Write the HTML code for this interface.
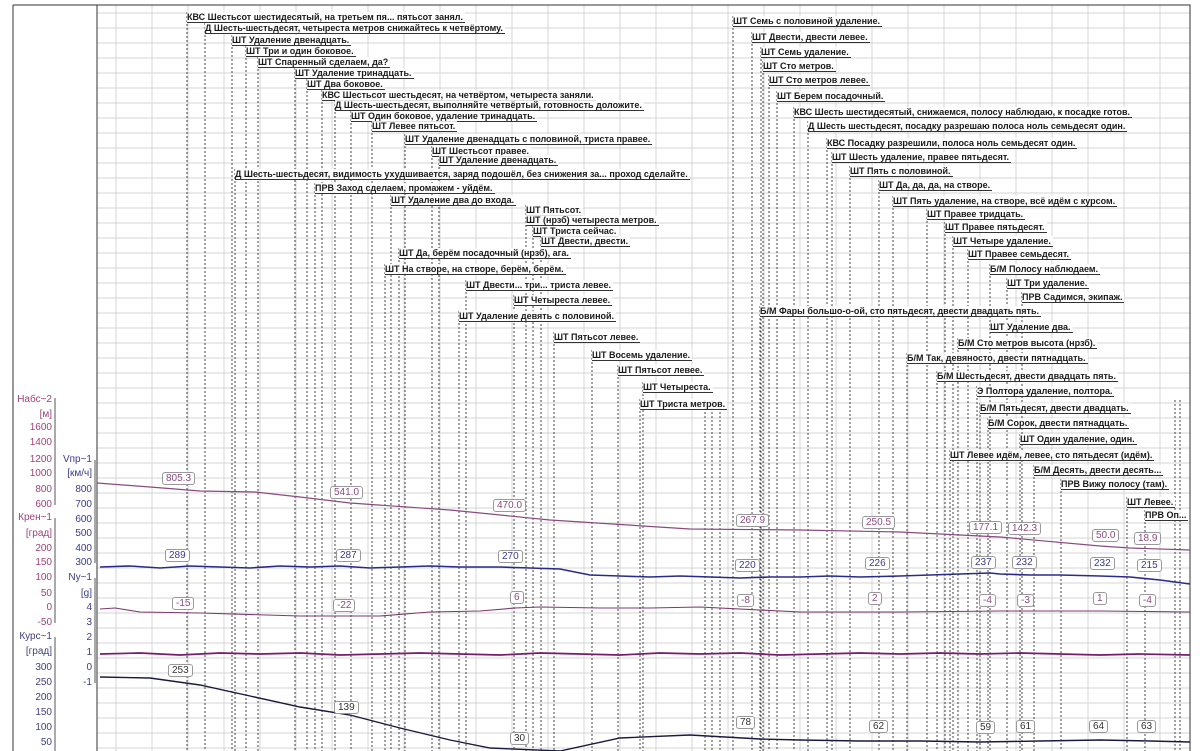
<!DOCTYPE html>
<html><head><meta charset="utf-8"><style>
html,body{margin:0;padding:0;background:#fff;width:1200px;height:751px;overflow:hidden}
#w{position:relative;width:1200px;height:751px}
svg{position:absolute;left:0;top:0}
.l{position:absolute;font:bold 9px "Liberation Sans","Noto Sans CJK SC",sans-serif;color:#1a1a1a;white-space:nowrap;line-height:10px;border-bottom:1px solid #333;padding-right:2px;background:rgba(255,255,255,0.85)}
.ax{position:absolute;font:10px "Liberation Sans",sans-serif;text-align:right;line-height:10px}
.v{position:absolute;font:10px "Liberation Sans",sans-serif;border:1px solid #999;border-radius:3px;background:#fff;padding:0 3px;line-height:11px}
</style></head><body><div id="w">
<svg width="1200" height="751" xmlns="http://www.w3.org/2000/svg">
<g stroke="#d4d4d4" stroke-width="1">
<path d="M97 13H1190M97 28H1190M97 43H1190M97 58H1190M97 73H1190M97 88H1190M97 103H1190M97 118H1190M97 133H1190M97 148H1190M97 163H1190M97 178H1190M97 193H1190M97 208H1190M97 223H1190M97 238H1190M97 253H1190M97 268H1190M97 283H1190M97 298H1190M97 313H1190M97 328H1190M97 343H1190M97 358H1190M97 373H1190M97 388H1190M97 403H1190M97 418H1190M97 433H1190M97 448H1190M97 463H1190M97 478H1190M97 493H1190M97 508H1190M97 523H1190M97 538H1190M97 553H1190M97 568H1190M97 583H1190M97 598H1190M97 613H1190M97 628H1190M97 643H1190M97 658H1190M97 673H1190M97 688H1190M97 703H1190M97 718H1190M97 733H1190M97 748H1190"/>
<path d="M116 5V751M152 5V751M188 5V751M224 5V751M260 5V751M296 5V751M332 5V751M368 5V751M404 5V751M440 5V751M476 5V751M512 5V751M548 5V751M584 5V751M620 5V751M656 5V751M692 5V751M728 5V751M764 5V751M800 5V751M836 5V751M872 5V751M908 5V751M944 5V751M980 5V751M1016 5V751M1052 5V751M1088 5V751M1124 5V751M1160 5V751"/>
</g>
<g stroke="#333" stroke-width="1" fill="none">
<path d="M13 5H1190V751M13 5V751M97 5V751"/>
<path d="M55 398V505M55 518V623M55 637V751M95 460V563M95 578V683" stroke="#555"/>
</g>
<g stroke="#444" stroke-width="1" stroke-dasharray="2,2" fill="none" id="dl">
<path d="M187 12V751M205 23V751M232 35V751M246 46V751M258 57V751M295 68V751M307 79V751M322 90V751M335 100V751M351 111V751M372 121V751M405 134V751M432 146V751M439 155V751M235 169V751M315 183V751M391 195V751M526 205V751M533 226V751M541 236V751M399 248V751M385 264V751M466 280V751M514 295V751M459 311V751M554 332V751M592 350V751M618 365V751M643 382V751M640 399V751M733 16V751M752 32V751M761 47V751M763 61V751M769 75V751M777 91V751M794 107V751M808 121V751M827 138V751M832 152V751M850 166V751M879 180V751M893 196V751M927 209V751M945 222V751M953 236V751M968 249V751M990 264V751M1007 278V751M1022 292V751M760 306V751M958 338V751M907 353V751M937 371V751M977 386V751M980 403V751M988 418V751M1020 434V751M950 450V751M1034 465V751M1061 479V751M1127 497V751M1145 510V751M705 400V751M712 400V751M720 400V751M1175 400V751M1180 400V751"/>
</g>
<!-- curves -->
<polyline fill="none" stroke="#8a4a80" stroke-width="1.2" points="97,483 150,487 200,491 255,492 300,497 350,503 450,510 550,520 690,529 800,530 900,532 1000,537 1100,546 1130,548 1190,550"/>
<polyline fill="none" stroke="#2a2a8a" stroke-width="1.6" points="100,567 130,566 160,568 190,566 220,567 250,568 280,566 310,567 340,566 370,568 400,567 430,566 460,567 500,567 530,568 560,569 590,575 620,576 650,577 680,576 710,577 740,578 770,577 800,577 830,576 860,577 900,576 930,575 960,574 990,573 1000,574 1030,575 1060,575 1100,576 1130,577 1160,580 1190,584"/>
<polyline fill="none" stroke="#7a3a70" stroke-width="1.1" points="100,609 115,608 140,612 200,613 300,616 380,616 430,612 480,611 515,608 540,607 600,608 650,608 700,607 800,612 900,612 1000,611 1100,611 1190,612"/>
<polyline fill="none" stroke="#7a1a6a" stroke-width="1.7" points="100,654 140,653 180,655 220,653 260,654 300,653 340,655 380,654 420,653 460,654 500,655 540,653 580,654 620,655 660,653 700,654 740,653 780,655 820,654 860,653 900,654 940,653 980,654 1020,653 1060,654 1100,655 1140,654 1190,655"/>
<polyline fill="none" stroke="#1a1a40" stroke-width="1.4" points="100,677 150,678 200,685 250,696 300,707 350,715 400,728 450,740 490,748 560,751 620,738 690,735 760,739 800,740 860,741 920,741 980,742 1040,741 1100,740 1150,741 1190,742"/>
</svg>

<div class="ax" style="left:8px;top:395px;width:44px;color:#a0407a">Набс~2</div>
<div class="ax" style="left:8px;top:410px;width:44px;color:#a0407a">[м]</div>
<div class="ax" style="left:8px;top:423px;width:44px;color:#a0407a">1600</div>
<div class="ax" style="left:8px;top:438px;width:44px;color:#a0407a">1400</div>
<div class="ax" style="left:8px;top:455px;width:44px;color:#a0407a">1200</div>
<div class="ax" style="left:8px;top:469px;width:44px;color:#a0407a">1000</div>
<div class="ax" style="left:8px;top:485px;width:44px;color:#a0407a">800</div>
<div class="ax" style="left:8px;top:500px;width:44px;color:#a0407a">600</div>
<div class="ax" style="left:8px;top:513px;width:44px;color:#a0407a">Крен~1</div>
<div class="ax" style="left:8px;top:529px;width:44px;color:#a0407a">[град]</div>
<div class="ax" style="left:8px;top:544px;width:44px;color:#a0407a">200</div>
<div class="ax" style="left:8px;top:558px;width:44px;color:#a0407a">150</div>
<div class="ax" style="left:8px;top:573px;width:44px;color:#a0407a">100</div>
<div class="ax" style="left:8px;top:589px;width:44px;color:#a0407a">50</div>
<div class="ax" style="left:8px;top:603px;width:44px;color:#a0407a">0</div>
<div class="ax" style="left:8px;top:618px;width:44px;color:#a0407a">-50</div>
<div class="ax" style="left:8px;top:632px;width:44px;color:#404080">Курс~1</div>
<div class="ax" style="left:8px;top:647px;width:44px;color:#404080">[град]</div>
<div class="ax" style="left:8px;top:663px;width:44px;color:#404080">300</div>
<div class="ax" style="left:8px;top:678px;width:44px;color:#404080">250</div>
<div class="ax" style="left:8px;top:693px;width:44px;color:#404080">200</div>
<div class="ax" style="left:8px;top:708px;width:44px;color:#404080">150</div>
<div class="ax" style="left:8px;top:723px;width:44px;color:#404080">100</div>
<div class="ax" style="left:8px;top:738px;width:44px;color:#404080">50</div>

<div class="ax" style="left:58px;top:455px;width:34px;color:#3a3a90">Vпр~1</div>
<div class="ax" style="left:58px;top:469px;width:34px;color:#3a3a90">[км/ч]</div>
<div class="ax" style="left:58px;top:485px;width:34px;color:#3a3a90">800</div>
<div class="ax" style="left:58px;top:500px;width:34px;color:#3a3a90">700</div>
<div class="ax" style="left:58px;top:515px;width:34px;color:#3a3a90">600</div>
<div class="ax" style="left:58px;top:529px;width:34px;color:#3a3a90">500</div>
<div class="ax" style="left:58px;top:544px;width:34px;color:#3a3a90">400</div>
<div class="ax" style="left:58px;top:558px;width:34px;color:#3a3a90">300</div>
<div class="ax" style="left:58px;top:573px;width:34px;color:#3a3a90">Ny~1</div>
<div class="ax" style="left:58px;top:589px;width:34px;color:#3a3a90">[g]</div>
<div class="ax" style="left:58px;top:603px;width:34px;color:#3a3a90">4</div>
<div class="ax" style="left:58px;top:618px;width:34px;color:#3a3a90">3</div>
<div class="ax" style="left:58px;top:633px;width:34px;color:#3a3a90">2</div>
<div class="ax" style="left:58px;top:648px;width:34px;color:#3a3a90">1</div>
<div class="ax" style="left:58px;top:663px;width:34px;color:#3a3a90">0</div>
<div class="ax" style="left:58px;top:678px;width:34px;color:#3a3a90">-1</div>

<div class="l" style="left:187px;top:12px">КВС Шестьсот шестидесятый, на третьем пя... пятьсот занял.</div>
<div class="l" style="left:205px;top:23px">Д Шесть-шестьдесят, четыреста метров снижайтесь к четвёртому.</div>
<div class="l" style="left:232px;top:35px">ШТ Удаление двенадцать.</div>
<div class="l" style="left:246px;top:46px">ШТ Три и один боковое.</div>
<div class="l" style="left:258px;top:57px">ШТ Спаренный сделаем, да?</div>
<div class="l" style="left:295px;top:68px">ШТ Удаление тринадцать.</div>
<div class="l" style="left:307px;top:79px">ШТ Два боковое.</div>
<div class="l" style="left:322px;top:90px">КВС Шестьсот шестьдесят, на четвёртом, четыреста заняли.</div>
<div class="l" style="left:335px;top:100px">Д Шесть-шестьдесят, выполняйте четвёртый, готовность доложите.</div>
<div class="l" style="left:351px;top:111px">ШТ Один боковое, удаление тринадцать.</div>
<div class="l" style="left:372px;top:121px">ШТ Левее пятьсот.</div>
<div class="l" style="left:405px;top:134px">ШТ Удаление двенадцать с половиной, триста правее.</div>
<div class="l" style="left:432px;top:146px">ШТ Шестьсот правее.</div>
<div class="l" style="left:439px;top:155px">ШТ Удаление двенадцать.</div>
<div class="l" style="left:235px;top:169px">Д Шесть-шестьдесят, видимость ухудшивается, заряд подошёл, без снижения за... проход сделайте.</div>
<div class="l" style="left:315px;top:183px">ПРВ Заход сделаем, промажем - уйдём.</div>
<div class="l" style="left:391px;top:195px">ШТ Удаление два до входа.</div>
<div class="l" style="left:526px;top:205px">ШТ Пятьсот.</div>
<div class="l" style="left:526px;top:215px">ШТ (нрзб) четыреста метров.</div>
<div class="l" style="left:533px;top:226px">ШТ Триста сейчас.</div>
<div class="l" style="left:541px;top:236px">ШТ Двести, двести.</div>
<div class="l" style="left:399px;top:248px">ШТ Да, берём посадочный (нрзб), ага.</div>
<div class="l" style="left:385px;top:264px">ШТ На створе, на створе, берём, берём.</div>
<div class="l" style="left:466px;top:280px">ШТ Двести... три... триста левее.</div>
<div class="l" style="left:514px;top:295px">ШТ Четыреста левее.</div>
<div class="l" style="left:459px;top:311px">ШТ Удаление девять с половиной.</div>
<div class="l" style="left:554px;top:332px">ШТ Пятьсот левее.</div>
<div class="l" style="left:592px;top:350px">ШТ Восемь удаление.</div>
<div class="l" style="left:618px;top:365px">ШТ Пятьсот левее.</div>
<div class="l" style="left:643px;top:382px">ШТ Четыреста.</div>
<div class="l" style="left:640px;top:399px">ШТ Триста метров.</div>

<div class="l" style="left:733px;top:16px">ШТ Семь с половиной удаление.</div>
<div class="l" style="left:752px;top:32px">ШТ Двести, двести левее.</div>
<div class="l" style="left:761px;top:47px">ШТ Семь удаление.</div>
<div class="l" style="left:763px;top:61px">ШТ Сто метров.</div>
<div class="l" style="left:769px;top:75px">ШТ Сто метров левее.</div>
<div class="l" style="left:777px;top:91px">ШТ Берем посадочный.</div>
<div class="l" style="left:794px;top:107px">КВС Шесть шестидесятый, снижаемся, полосу наблюдаю, к посадке готов.</div>
<div class="l" style="left:808px;top:121px">Д Шесть шестьдесят, посадку разрешаю полоса ноль семьдесят один.</div>
<div class="l" style="left:827px;top:138px">КВС Посадку разрешили, полоса ноль семьдесят один.</div>
<div class="l" style="left:832px;top:152px">ШТ Шесть удаление, правее пятьдесят.</div>
<div class="l" style="left:850px;top:166px">ШТ Пять с половиной.</div>
<div class="l" style="left:879px;top:180px">ШТ Да, да, да, на створе.</div>
<div class="l" style="left:893px;top:196px">ШТ Пять удаление, на створе, всё идём с курсом.</div>
<div class="l" style="left:927px;top:209px">ШТ Правее тридцать.</div>
<div class="l" style="left:945px;top:222px">ШТ Правее пятьдесят.</div>
<div class="l" style="left:953px;top:236px">ШТ Четыре удаление.</div>
<div class="l" style="left:968px;top:249px">ШТ Правее семьдесят.</div>
<div class="l" style="left:990px;top:264px">Б/М Полосу наблюдаем.</div>
<div class="l" style="left:1007px;top:278px">ШТ Три удаление.</div>
<div class="l" style="left:1022px;top:292px">ПРВ Садимся, экипаж.</div>
<div class="l" style="left:760px;top:306px">Б/М Фары большо-о-ой, сто пятьдесят, двести двадцать пять.</div>
<div class="l" style="left:990px;top:322px">ШТ Удаление два.</div>
<div class="l" style="left:958px;top:338px">Б/М Сто метров высота (нрзб).</div>
<div class="l" style="left:907px;top:353px">Б/М Так, девяносто, двести пятнадцать.</div>
<div class="l" style="left:937px;top:371px">Б/М Шестьдесят, двести двадцать пять.</div>
<div class="l" style="left:977px;top:386px">Э Полтора удаление, полтора.</div>
<div class="l" style="left:980px;top:403px">Б/М Пятьдесят, двести двадцать.</div>
<div class="l" style="left:988px;top:418px">Б/М Сорок, двести пятнадцать.</div>
<div class="l" style="left:1020px;top:434px">ШТ Один удаление, один.</div>
<div class="l" style="left:950px;top:450px">ШТ Левее идём, левее, сто пятьдесят (идём).</div>
<div class="l" style="left:1034px;top:465px">Б/М Десять, двести десять...</div>
<div class="l" style="left:1061px;top:479px">ПРВ Вижу полосу (там).</div>
<div class="l" style="left:1127px;top:497px">ШТ Левее.</div>
<div class="l" style="left:1145px;top:510px">ПРВ Оп...</div>

<!-- value boxes -->
<div class="v" style="left:162px;top:472px;color:#8a4a80">805.3</div>
<div class="v" style="left:330px;top:486px;color:#8a4a80">541.0</div>
<div class="v" style="left:493px;top:499px;color:#8a4a80">470.0</div>
<div class="v" style="left:736px;top:514px;color:#8a4a80">267.9</div>
<div class="v" style="left:862px;top:516px;color:#8a4a80">250.5</div>
<div class="v" style="left:969px;top:521px;color:#8a4a80">177.1</div>
<div class="v" style="left:1008px;top:522px;color:#8a4a80">142.3</div>
<div class="v" style="left:1092px;top:529px;color:#8a4a80">50.0</div>
<div class="v" style="left:1134px;top:532px;color:#8a4a80">18.9</div>

<div class="v" style="left:165px;top:549px;color:#3a3a90">289</div>
<div class="v" style="left:336px;top:549px;color:#3a3a90">287</div>
<div class="v" style="left:498px;top:550px;color:#3a3a90">270</div>
<div class="v" style="left:735px;top:559px;color:#3a3a90">220</div>
<div class="v" style="left:865px;top:557px;color:#3a3a90">226</div>
<div class="v" style="left:971px;top:556px;color:#3a3a90">237</div>
<div class="v" style="left:1012px;top:556px;color:#3a3a90">232</div>
<div class="v" style="left:1090px;top:557px;color:#3a3a90">232</div>
<div class="v" style="left:1137px;top:559px;color:#3a3a90">215</div>

<div class="v" style="left:172px;top:597px;color:#8a4a80">-15</div>
<div class="v" style="left:333px;top:599px;color:#8a4a80">-22</div>
<div class="v" style="left:510px;top:591px;color:#8a4a80">6</div>
<div class="v" style="left:737px;top:594px;color:#8a4a80">-8</div>
<div class="v" style="left:868px;top:592px;color:#8a4a80">2</div>
<div class="v" style="left:979px;top:594px;color:#8a4a80">-4</div>
<div class="v" style="left:1017px;top:594px;color:#8a4a80">-3</div>
<div class="v" style="left:1093px;top:592px;color:#8a4a80">1</div>
<div class="v" style="left:1139px;top:594px;color:#8a4a80">-4</div>

<div class="v" style="left:168px;top:664px;color:#333">253</div>
<div class="v" style="left:334px;top:701px;color:#333">139</div>
<div class="v" style="left:510px;top:732px;color:#333">30</div>
<div class="v" style="left:736px;top:716px;color:#333">78</div>
<div class="v" style="left:869px;top:720px;color:#333">62</div>
<div class="v" style="left:976px;top:721px;color:#333">59</div>
<div class="v" style="left:1016px;top:720px;color:#333">61</div>
<div class="v" style="left:1089px;top:720px;color:#333">64</div>
<div class="v" style="left:1137px;top:720px;color:#333">63</div>
</div></body></html>
